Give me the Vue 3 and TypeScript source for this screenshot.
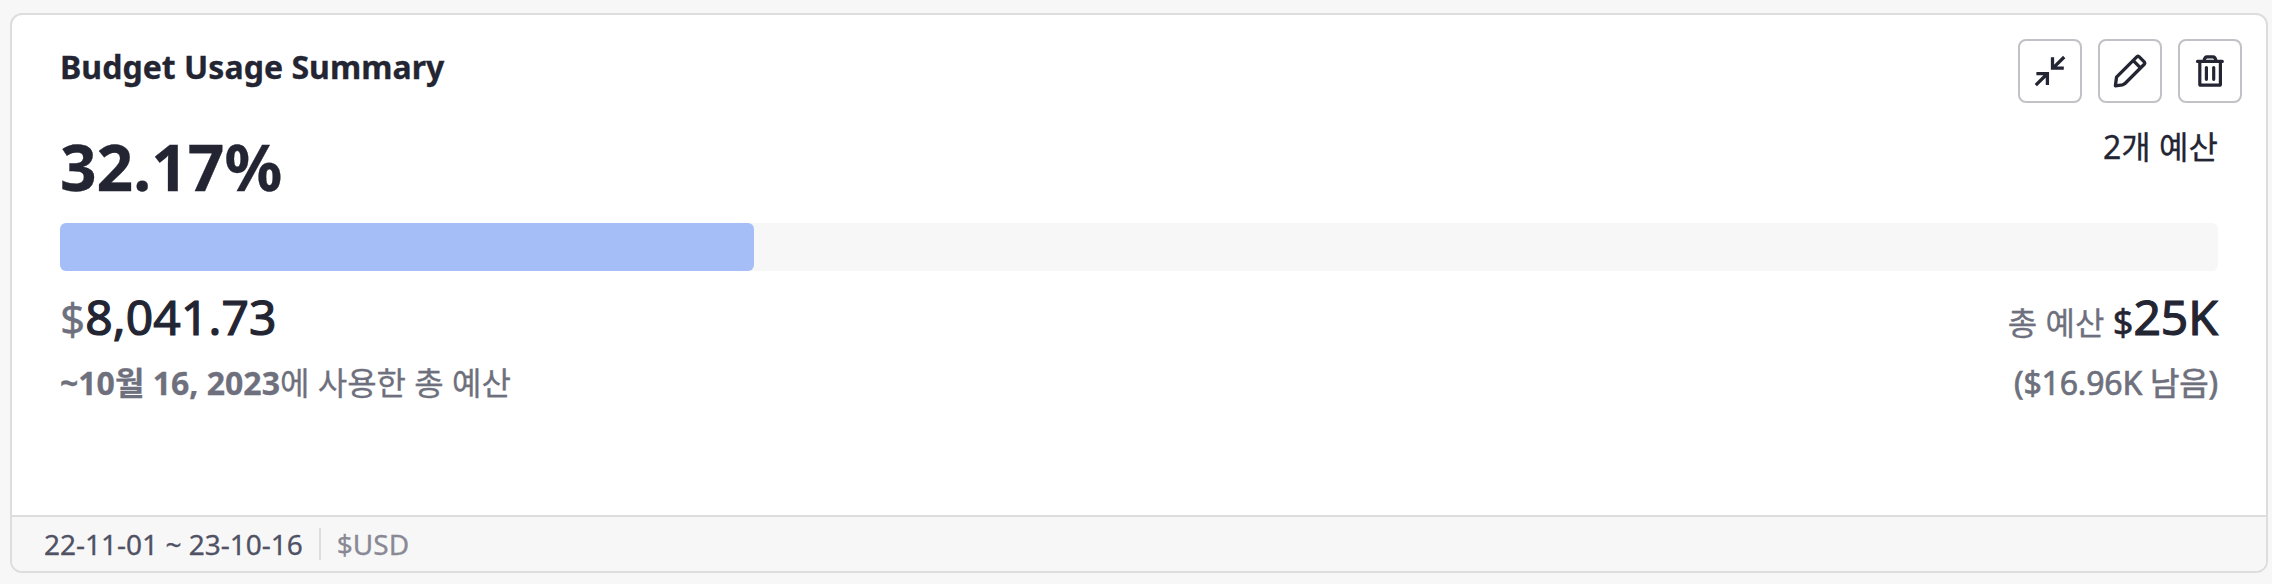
<script setup lang="ts">
const usage = 32.17
const barStyle = { width: `${usage}%` }
</script>

<template>
  <article class="card">
    <div class="body">
      <header class="head">
        <h2 class="title">Budget Usage Summary</h2>
        <div class="actions">
          <button class="action" type="button" aria-label="Collapse">
            <svg viewBox="0 0 64 64" fill="none" stroke="currentColor" stroke-width="3.3">
              <path d="M46.2 18 35 29.2M34.5 18.2V29.2H45.8M17.8 46.2 29 35M18.4 34.6H29.4V46" />
            </svg>
          </button>
          <button class="action" type="button" aria-label="Edit">
            <svg viewBox="0 0 64 64" fill="none" stroke="currentColor" stroke-width="3.3" stroke-linejoin="round">
              <path d="M17.4 46.8 18.5 38.2 39 17.7Q40 16.9 41 17.7L46.5 23.2Q47.2 24.1 46.5 25L27 44.5 24.5 45.9ZM35.3 21.6 42.5 28.8" />
            </svg>
          </button>
          <button class="action" type="button" aria-label="Delete">
            <svg viewBox="0 0 64 64" fill="none" stroke="currentColor" stroke-width="3.2" stroke-linejoin="round" stroke-linecap="round">
              <path d="M19.5 22.4H44.3M21.8 23V45.2Q21.8 46.2 22.8 46.2H41.4Q42.4 46.2 42.4 45.2V23M26 22Q26.5 17.8 29 17.8H35Q37.5 17.8 38 22M28.4 28.5V40.3M35.7 28.5V40.3" />
            </svg>
          </button>
        </div>
      </header>

      <div class="summary">
        <strong class="percent">{{ usage }}%</strong>
        <span class="count">2개 예산</span>
      </div>

      <div class="track"><div class="fill" :style="barStyle"></div></div>

      <div class="amounts">
        <p class="amount medium"><span class="currency">$</span>8,041.73</p>
        <p class="total"><span class="label">총 예산</span> <span class="sign">$</span><span class="medium big">25K</span></p>
      </div>
      <div class="notes">
        <p><b>~10월 16, 2023</b>에 사용한 총 예산</p>
        <p class="left">($16.96K 남음)</p>
      </div>
    </div>

    <footer class="foot">
      <span class="period">22-11-01 ~ 23-10-16</span>
      <i class="divider"></i>
      <span class="unit">$USD</span>
    </footer>
  </article>
</template>

<style>
body {
  background: #f7f7f7;
}
</style>

<style scoped>
.card {
  box-sizing: border-box;
  display: flex;
  flex-direction: column;
  width: 2258px;
  height: 560px;
  margin: 13px 0 0 10px;
  border: 2px solid #dddddf;
  border-radius: 12px;
  background: #fff;
  color: #232533;
  font-family: "Noto Sans", "Noto Sans CJK KR", sans-serif;
  font-size: 32px;
  line-height: 40px;
  white-space: nowrap;
  -webkit-text-stroke: 0.3px currentColor;
  overflow: hidden;
}
.body {
  flex: 1;
  padding: 24px 48px 0;
}
h2,
p {
  margin: 0;
}
.head {
  display: flex;
  justify-content: space-between;
  height: 64px;
  margin-right: -24px;
}
.title {
  padding-top: 8px;
  font-size: 32px;
  line-height: 40px;
  font-weight: 700;
  letter-spacing: 0.04px;
}
.actions {
  display: flex;
  gap: 16px;
}
.action {
  box-sizing: border-box;
  width: 64px;
  height: 64px;
  padding: 0;
  border: 2px solid #c1c1c7;
  border-radius: 8px;
  background: #fff;
  color: #232533;
}
.action svg {
  display: block;
  width: 64px;
  height: 64px;
  margin: -2px;
}
.summary {
  display: flex;
  justify-content: space-between;
  height: 120px;
}
.percent {
  padding-top: 24px;
  font-size: 64px;
  line-height: 80px;
}
.count {
  padding-top: 24px;
}
.track {
  height: 48px;
  border-radius: 6px;
  background: #f7f7f7;
}
.fill {
  height: 100%;
  border-radius: 6px;
  background: #a6bef7;
}
.amounts,
.notes {
  display: flex;
  justify-content: space-between;
}
.amounts {
  height: 92px;
  line-height: 92px;
}
.medium {
  -webkit-text-stroke: 1.2px currentColor;
}
.amount,
.big {
  font-size: 48px;
}
.amount {
  letter-spacing: 0.1px;
}
.sign {
  font-size: 36px;
  -webkit-text-stroke: 0.6px currentColor;
}
.currency {
  color: #6e707d;
  font-size: 44px;
  -webkit-text-stroke: 0.4px currentColor;
}
.label {
  color: #6e707d;
}
.notes {
  color: #6e707d;
}
.left {
  letter-spacing: -0.2px;
  -webkit-text-stroke: 0.7px currentColor;
}
.foot {
  display: flex;
  align-items: center;
  height: 54px;
  padding: 0 32px;
  border-top: 2px solid #dddddf;
  background: #f7f7f7;
  font-size: 28px;
}
.period {
  color: #4f5164;
}
.divider {
  width: 2px;
  height: 32px;
  margin: 0 16px;
  background: #dddddf;
}
.unit {
  color: #898995;
}
</style>
